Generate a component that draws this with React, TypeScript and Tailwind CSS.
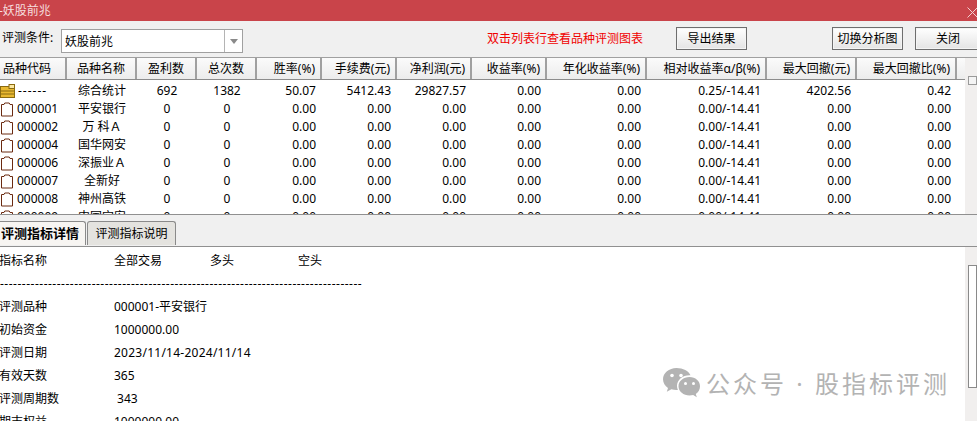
const COLS = "grid grid-cols-[67px_70px_60px_60px_65px_75px_75px_75px_100px_120px_90px_100px_8px]";

const HEADERS = ["品种名称", "盈利数", "总次数", "胜率(%)", "手续费(元)", "净利润(元)", "收益率(%)", "年化收益率(%)", "相对收益率α/β(%)", "最大回撤(元)", "最大回撤比(%)"];

const NAMES: [string, string][] = [
  ["000001", "平安银行"],
  ["000002", "万 科Ａ"],
  ["000004", "国华网安"],
  ["000006", "深振业Ａ"],
  ["000007", "全新好"],
  ["000008", "神州高铁"],
  ["000009", "中国宝安"],
];

const DETAILS: [string, string, string][] = [
  ["评测品种", "000001-平安银行", ""],
  ["初始资金", "1000000.00", ""],
  ["评测日期", "2023/11/14-2024/11/14", "tracking-[0.25px]"],
  ["有效天数", "365", ""],
  ["评测周期数", " 343", ""],
  ["期末权益", "1000000.00", ""],
];

function Doc() {
  return (
    <svg width="14" height="15" viewBox="0 0 14 15" className="shrink-0">
      <path d="M1.500 2.500h2.500l.8-1.500h4.400l.8 1.500h2.500v11.500h-11z" fill="#fff" stroke="#6b2a10" strokeWidth="1" />
    </svg>
  );
}

function Folder() {
  return (
    <svg width="16" height="14" viewBox="0 0 16 14" className="shrink-0">
      <rect x="0.500" y="2.500" width="14" height="11" fill="#e8b830" stroke="#8a6a10" />
      <rect x="9" y="0.500" width="5.500" height="4" fill="#fbe7a0" stroke="#8a6a10" />
      <path d="M1 7h13M1 10h13" stroke="#8a6a10" strokeWidth="1" />
    </svg>
  );
}

function Btn({ label, className }: { label: string; className: string }) {
  return (
    <button className={`h-[23px] shrink-0 border border-[#6e6e6e] bg-linear-to-b from-white to-[#e4e4e4] text-[12px] text-black shadow-[inset_0_0_0_1px_#f4f4f4] ${className}`}>
      {label}
    </button>
  );
}

function Row({ icon, code, codeClass, name, cells }: { icon: React.ReactNode; code: string; codeClass?: string; name: string; cells: string[] }) {
  return (
    <div className={`${COLS} h-[18px] items-center leading-[18px] text-black`}>
      <div className="flex items-center">
        <span className="flex w-[17px] justify-start">{icon}</span>
        <span className={codeClass}>{code}</span>
      </div>
      <div className="text-center">{name}</div>
      <div className="text-center">{cells[0]}</div>
      <div className="text-center">{cells[1]}</div>
      {cells.slice(2).map((c, i) => (
        <div key={i} className="pr-[6px] text-right">{c}</div>
      ))}
    </div>
  );
}

export default function App() {
  return (
    <div className="relative flex h-[421px] w-[977px] flex-col overflow-hidden bg-[#f0f0f0] font-['Noto_Sans','Noto_Sans_CJK_SC',sans-serif] text-[12px] text-black">
      {/* title */}
      <div className="flex h-[21px] shrink-0 items-center justify-between bg-[#c9444a] text-[12px] text-[#f6dede]">
        <span className="-ml-[1px]">-妖股前兆</span>
        <svg width="11" height="11" viewBox="0 0 11 11" className="mr-[-1px] mt-[4px]">
          <path d="M0.500 0.500l10 10M10.500 0.500l-10 10" stroke="#f3d0d0" strokeWidth="1" />
        </svg>
      </div>

      {/* toolbar */}
      <div className="flex h-[36px] shrink-0 items-center">
        <span className="ml-[2px] w-[59px] shrink-0 -translate-y-[1px] text-[12px]">评测条件:</span>
        <div className="mt-[4px] flex h-[24px] w-[182px] shrink-0 border border-[#a0a0a0] bg-white">
          <span className="flex-1 pl-[3px] text-[12px] leading-[24px]">妖股前兆</span>
          <span className="flex w-[18px] items-center justify-center border-l border-[#b4b4b4]">
            <svg width="8" height="5" viewBox="0 0 8 5">
              <path d="M0 0h8L4 5z" fill="#8a8a8a" />
            </svg>
          </span>
        </div>
        <span className="ml-[244px] w-[189px] shrink-0 text-[12px] text-[#f00000]">双击列表行查看品种评测图表</span>
        <Btn label="导出结果" className="-mt-[1px] w-[71px]" />
        <Btn label="切换分析图" className="-mt-[1px] ml-[85px] w-[71px]" />
        <Btn label="关闭" className="-mt-[1px] ml-[12px] w-[66px]" />
      </div>

      {/* list */}
      <div className="flex h-[157px] shrink-0 overflow-hidden border-t border-[#a0a0a0] bg-white">
        <div className="w-[965px] shrink-0">
          <div className={`${COLS} h-[22px] border-b-2 border-[#8c8c8c]`}>
            <div className="border-r-2 border-[#a0a0a0] bg-linear-to-b from-[#fbfbfb] to-[#ececec] pl-[3px] leading-[21px]">品种代码</div>
            {HEADERS.map((h, i) => (
              <div
                key={h}
                className={`border-r-2 border-[#a0a0a0] bg-linear-to-b from-[#fbfbfb] to-[#ececec] leading-[21px] ${
                  i < 3 ? "text-center" : "pr-[5px] text-right"
                }`}
              >
                {h}
              </div>
            ))}
            <div className="bg-linear-to-b from-[#fbfbfb] to-[#ececec]" />
          </div>
          <div className="pt-[2px]">
            <Row
              icon={<Folder />}
              code="------"
              codeClass="ml-[1px] tracking-[1px]"
              name="综合统计"
              cells={["692", "1382", "50.07", "5412.43", "29827.57", "0.00", "0.00", "0.25/-14.41", "4202.56", "0.42"]}
            />
            {NAMES.map(([code, name]) => (
              <Row
                key={code}
                icon={<Doc />}
                code={code}
                name={name}
                cells={["0", "0", "0.00", "0.00", "0.00", "0.00", "0.00", "0.00/-14.41", "0.00", "0.00"]}
              />
            ))}
          </div>
        </div>
        <div className="flex-1 bg-[#f1efee] pl-[3px] pt-[18px]">
          <div className="h-[9px] w-full border border-[#9a9a9a] bg-[#f4f4f4]" />
        </div>
      </div>

      {/* tabs */}
      <div className="flex h-[33px] shrink-0 items-end border-y border-[#909090] bg-[#f0f0f0] pb-[1px]">
        <div className="flex h-[24px] w-[86px] items-center rounded-tr-[3px] border-t border-r border-[#8a8a8a] bg-[#f7f5f2] pl-[1px] text-[13px] font-bold">
          评测指标详情
        </div>
        <div className="ml-[1px] flex h-[24px] w-[89px] items-center justify-center rounded-t-[3px] border-x border-t border-[#8a8a8a] bg-[#e4e3df] text-[12px]">
          评测指标说明
        </div>
      </div>

      {/* details */}
      <div className="flex min-h-0 flex-1">
        <div className="w-[965px] shrink-0 overflow-hidden bg-white pt-[2px] leading-[23px]">
          <div className="grid grid-cols-[115px_96px_88px_auto] -ml-[1px]">
            <span>指标名称</span>
            <span>全部交易</span>
            <span>多头</span>
            <span>空头</span>
          </div>
          <div className="w-[362px] overflow-hidden whitespace-nowrap tracking-[0.5px]">{"-".repeat(90)}</div>
          {DETAILS.map(([k, v, c]) => (
            <div key={k} className="grid grid-cols-[115px_auto] -ml-[1px]">
              <span>{k}</span>
              <span className={`whitespace-pre ${c}`}>{v}</span>
            </div>
          ))}
        </div>
        <div className="flex-1 bg-[#f1efee] pl-[3px] pt-[18px]">
          <div className="h-[123px] w-full border border-[#8a8a8a] bg-white" />
        </div>
      </div>

      {/* watermark */}
      <div className="absolute left-[663px] top-[368px] flex items-center text-[#b3b3b3]">
        <svg width="37" height="31" viewBox="0 0 37 31" className="shrink-0">
          <path d="M13.500 0C6 0 0 5 0 11.200c0 3.600 2 6.700 5 8.700l-1.200 3.800 4.600-2.400c1.600.4 3.300.7 5.100.7l1.400-.1C14.400 20.700 14 19.300 14 18c0-6 5.600-10.700 12.500-10.700h1C25.700 3 20 0 13.500 0z" fill="#b3b3b3" />
          <circle cx="9" cy="7.500" r="1.800" fill="#fff" />
          <circle cx="18" cy="7.500" r="1.800" fill="#fff" />
          <path d="M26.500 9C20.500 9 15.500 13 15.500 18.200S20.500 27.500 26.500 27.500c1.300 0 2.500-.2 3.700-.5l3.600 2.200-1-3.200c2.600-1.800 4.200-4.600 4.200-7.800C37 13 32.500 9 26.500 9z" fill="#b3b3b3" />
          <circle cx="22.500" cy="15.500" r="1.500" fill="#fff" />
          <circle cx="30.500" cy="15.500" r="1.500" fill="#fff" />
        </svg>
        <span className="ml-[6px] whitespace-pre text-[24px] leading-[30px] tracking-[3px]">公众号 · 股指标评测</span>
      </div>
    </div>
  );
}
